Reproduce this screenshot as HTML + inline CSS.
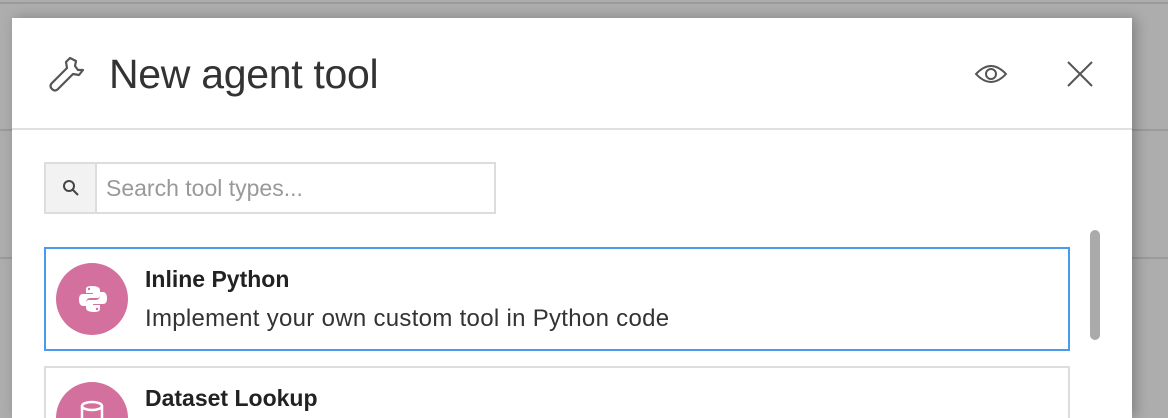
<!DOCTYPE html><html><head><style>
html,body{margin:0;width:1168px;height:418px;overflow:hidden}
body{background:#adadad;position:relative;font-family:"Liberation Sans",sans-serif}
.l{position:absolute;left:0;right:0;height:2px;background:#9a9a9a}
.m{position:absolute;left:12px;top:18px;width:1120px;height:400px;background:#fff;box-shadow:4px 0 12px rgba(0,0,0,.25);overflow:hidden}
.h{position:absolute;left:0;top:0;width:1120px;height:110px;border-bottom:2px solid #e0e0e0}
.t{position:absolute;left:97px;top:33px;font-size:41px;color:#333;letter-spacing:-0.3px}
.s{position:absolute;left:32px;top:144px;width:448px;height:48px;border:2px solid #ddd}
.si{position:absolute;left:0;top:0;width:49px;height:48px;background:#f2f2f2;border-right:2px solid #ddd}
.sp{position:absolute;left:60px;top:11px;font-size:23px;color:#999}
.c{position:absolute;left:32px;width:1022px;height:100px;border:2px solid #ddd}
.c1{top:229px;border-color:#4a9af0}
.ic{position:absolute;left:10px;top:14px;width:72px;height:72px;border-radius:50%;background:#d4709d}
.n{position:absolute;left:99px;top:17px;font-size:23px;font-weight:bold;color:#222}
.d{position:absolute;left:99px;top:56px;font-size:24px;color:#333;letter-spacing:0.3px}
.sb{position:absolute;left:1078px;top:212px;width:10px;height:110px;border-radius:5px;background:#aaa}
</style></head><body>
<div class="l" style="top:2px"></div>
<div class="l" style="top:129px"></div>
<div class="l" style="top:257px"></div>
<div class="m">
<div class="h">
<svg style="position:absolute;left:34px;top:36px" width="40" height="40" viewBox="0 0 40 40" fill="none" stroke="#555" stroke-width="2.2" stroke-linejoin="round"><path d="M24 4 L20 8 L21 14 L6 29 Q3 32 6 35 Q9 38 12 35 L27 20 L33 21 L37 16 L32 16 L29 12 L30 7 Z"/></svg>
<div class="t">New agent tool</div>
<svg style="position:absolute;left:962px;top:44px" width="34" height="24" viewBox="0 0 34 24" fill="none" stroke="#555" stroke-width="2"><path d="M2 12 Q17 -4 32 12 Q17 28 2 12Z"/><circle cx="17" cy="12" r="5"/></svg>
<svg style="position:absolute;left:1054px;top:42px" width="28" height="28" viewBox="0 0 28 28" stroke="#555" stroke-width="2"><path d="M2 2L26 26M26 2L2 26"/></svg>
</div>
<div class="s"><div class="si"><svg style="position:absolute;left:16px;top:15px" width="18" height="18" viewBox="0 0 18 18" fill="none" stroke="#444" stroke-width="2"><circle cx="7" cy="7" r="5"/><path d="M11 11L16 16"/></svg></div><div class="sp">Search tool types...</div></div>
<div class="c c1"><div class="ic"><svg style="position:absolute;left:22px;top:21px" width="30" height="30" viewBox="0 0 30 30" fill="#fff"><path d="M14 2c-6 0-6 2-6 4v3h7v1H5c-3 0-4 2-4 6s2 6 4 6h3v-4c0-2 2-4 4-4h7c2 0 3-1 3-3V6c0-2-2-4-8-4z"/><path d="M16 28c6 0 6-2 6-4v-3h-7v-1h10c3 0 4-2 4-6s-2-6-4-6h-3v4c0 2-2 4-4 4h-7c-2 0-3 1-3 3v5c0 2 2 4 8 4z"/><circle cx="11" cy="5" r="1.2" fill="#d4709d"/><circle cx="19" cy="25" r="1.2" fill="#d4709d"/></svg></div><div class="n">Inline Python</div><div class="d">Implement your own custom tool in Python code</div></div>
<div class="c" style="top:348px"><div class="ic"><svg style="position:absolute;left:24px;top:18px" width="24" height="30" viewBox="0 0 24 30" fill="none" stroke="#fff" stroke-width="2.5"><ellipse cx="12" cy="6" rx="10" ry="4"/><path d="M2 6v18c0 2 4 4 10 4s10-2 10-4V6"/></svg></div><div class="n">Dataset Lookup</div></div>
<div class="sb"></div>
</div>
</body></html>
